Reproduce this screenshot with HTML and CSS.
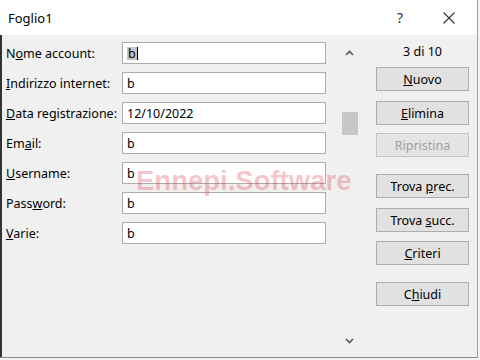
FILE: index.html
```html
<!DOCTYPE html>
<html lang="it">
<head>
<meta charset="utf-8">
<title>Foglio1</title>
<link rel="stylesheet" href="styles.css">
</head>
<body>
<div class="window">
  <div class="titlebar">
    <span class="title">Foglio1</span>
    <span class="help">?</span>
    <span class="close"><svg width="12" height="12" viewBox="0 0 12 12"><path d="M0.5 0.5 L11.5 11.5 M11.5 0.5 L0.5 11.5" stroke="#333" stroke-width="1.1" fill="none"/></svg></span>
  </div>
  <div class="body">
    <div class="form">
      <div class="row"><span class="label">N<u>o</u>me account:</span><div class="field"><span class="sel">b</span><span class="caret"></span></div></div>
      <div class="row"><span class="label"><u>I</u>ndirizzo internet:</span><div class="field">b</div></div>
      <div class="row"><span class="label"><u>D</u>ata registrazione:</span><div class="field">12/10/2022</div></div>
      <div class="row"><span class="label">Em<u>a</u>il:</span><div class="field">b</div></div>
      <div class="row"><span class="label"><u>U</u>sername:</span><div class="field">b</div></div>
      <div class="row"><span class="label">Pass<u>w</u>ord:</span><div class="field">b</div></div>
      <div class="row"><span class="label"><u>V</u>arie:</span><div class="field">b</div></div>
    </div>
    <div class="scrollbar">
      <div class="arrow"><svg width="9" height="6" viewBox="0 0 9 6"><path d="M1 5 L4.5 1.5 L8 5" stroke="#555" stroke-width="1.6" fill="none"/></svg></div>
      <div class="thumb"></div>
      <div class="arrow down"><svg width="9" height="6" viewBox="0 0 9 6"><path d="M1 1 L4.5 4.5 L8 1" stroke="#555" stroke-width="1.6" fill="none"/></svg></div>
    </div>
    <div class="side">
      <div class="counter">3 di 10</div>
      <div class="btn b-nuovo"><span><u>N</u>uovo</span></div>
      <div class="btn b-elimina"><span><u>E</u>limina</span></div>
      <div class="btn b-ripristina disabled"><span>Ripristina</span></div>
      <div class="btn b-prec"><span>Trova <u>p</u>rec.</span></div>
      <div class="btn b-succ"><span>Trova <u>s</u>ucc.</span></div>
      <div class="btn b-criteri"><span><u>C</u>riteri</span></div>
      <div class="btn b-chiudi"><span>C<u>h</u>iudi</span></div>
    </div>
    <div class="watermark">Ennepi.Software</div>
  </div>
</div>
</body>
</html>
```
FILE: styles.css
```css
html, body {
  margin: 0;
  padding: 0;
}
body {
  width: 480px;
  height: 360px;
  overflow: hidden;
  background: #f3f3f3;
  font-family: "Noto Sans", "Open Sans", sans-serif;
  font-size: 12.5px;
  color: #000;
}
.window {
  width: 478px;
  height: 358px;
  box-sizing: border-box;
  border-right: 1px solid #9c9c9c;
  border-bottom: 1px solid #8a8a8a;
  display: flex;
  flex-direction: column;
}
.titlebar {
  height: 35px;
  flex: none;
  background: #fff;
  display: flex;
  align-items: center;
  padding-left: 8px;
}
.title {
  font-size: 13px;
  flex: 1;
}
.help {
  font-size: 14px;
  color: #333;
  width: 10px;
  text-align: center;
  margin-right: 38px;
}
.close {
  display: flex;
  margin-right: 22px;
}
.body {
  position: relative;
  flex: 1;
  background: #f0f0f0;
  border-left: 2px solid #333;
  display: flex;
  align-items: stretch;
}
.form {
  padding: 7px 0 0 4px;
  display: flex;
  flex-direction: column;
  gap: 8px;
}
.row {
  display: flex;
  align-items: center;
  height: 22px;
}
.label {
  width: 116px;
  white-space: nowrap;
}
.field {
  width: 204px;
  height: 22px;
  box-sizing: border-box;
  background: #fff;
  border: 1px solid #ababab;
  padding-left: 4px;
  display: flex;
  align-items: center;
}
.sel {
  background: #c4c4c4;
  padding: 0 1px;
  line-height: 13px;
}
.caret {
  width: 1px;
  height: 13px;
  background: #000;
}
.scrollbar {
  width: 17px;
  margin-left: 15px;
  padding: 9px 0 8px;
  display: flex;
  flex-direction: column;
  align-items: center;
}
.arrow {
  height: 17px;
  display: flex;
  align-items: center;
  justify-content: center;
}
.arrow.down {
  margin-top: auto;
}
.thumb {
  width: 16px;
  height: 23px;
  margin-top: 51px;
  background: #c6c6c6;
}
.side {
  width: 93px;
  margin-left: 18px;
  padding-top: 8px;
  display: flex;
  flex-direction: column;
}
.counter {
  height: 18px;
  line-height: 18px;
  text-align: center;
  margin-bottom: 6px;
}
.btn {
  height: 24px;
  box-sizing: border-box;
  background: #e1e1e1;
  border: 1px solid #adadad;
  display: flex;
  align-items: center;
  justify-content: center;
  white-space: nowrap;
}
.btn.disabled {
  color: #a0a0a0;
  border-color: #c4c4c4;
  background: #e4e4e4;
}
.b-elimina { margin-top: 10px; }
.b-ripristina { margin-top: 8px; }
.b-prec { margin-top: 17px; }
.b-succ { margin-top: 10px; }
.b-criteri { margin-top: 9px; }
.b-chiudi { margin-top: 17px; }
.watermark {
  position: absolute;
  left: 134px;
  top: 132px;
  font-family: "Liberation Sans", Arial, sans-serif;
  font-weight: bold;
  font-size: 27.5px;
  line-height: 1;
  color: rgba(225, 50, 70, 0.28);
  white-space: nowrap;
  pointer-events: none;
}
```
